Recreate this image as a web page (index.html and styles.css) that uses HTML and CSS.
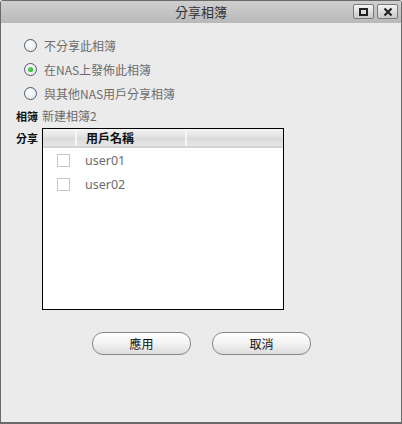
FILE: index.html
```html
<!DOCTYPE html>
<html>
<head>
<meta charset="utf-8">
<link rel="stylesheet" href="styles.css">
</head>
<body>
<div class="window">
  <div class="titlebar">
    <span class="title">分享相簿</span>
    <div class="win-btns">
      <span class="wbtn"><span class="sq"></span></span>
      <span class="wbtn"><svg width="10" height="10" viewBox="0 0 10 10"><path d="M1.5 1.5L8.5 8.5M8.5 1.5L1.5 8.5" stroke="#222" stroke-width="2.2"/></svg></span>
    </div>
  </div>
  <div class="content">
    <div class="radios">
      <label class="radio"><span class="dot"></span>不分享此相簿</label>
      <label class="radio"><span class="dot on"></span>在NAS上發佈此相簿</label>
      <label class="radio"><span class="dot"></span>與其他NAS用戶分享相簿</label>
    </div>
    <div class="field">
      <span class="lbl">相簿</span><span class="val">新建相簿2</span>
    </div>
    <div class="field share">
      <span class="lbl">分享</span>
      <div class="grid">
        <div class="ghead">
          <span class="hc c1"></span>
          <span class="hc c2">用戶名稱</span>
          <span class="hc c3"></span>
        </div>
        <div class="grow"><span class="cb"></span><span class="uname">user01</span></div>
        <div class="grow"><span class="cb"></span><span class="uname">user02</span></div>
      </div>
    </div>
    <div class="actions">
      <button class="btn">應用</button>
      <button class="btn">取消</button>
    </div>
  </div>
</div>
</body>
</html>
```
FILE: styles.css
```css
html, body { margin: 0; padding: 0; }
body {
  width: 402px; height: 424px; overflow: hidden;
  font-family: "Noto Sans", "Noto Sans CJK TC", sans-serif;
  font-size: 12px;
}
.window {
  box-sizing: border-box;
  width: 402px; height: 424px;
  border: 1px solid #6a6a6a;
  border-bottom-width: 2px;
  border-radius: 3px 3px 0 0;
  background: #ebebeb;
  display: flex; flex-direction: column;
}
.titlebar {
  height: 22px;
  flex: none;
  background: linear-gradient(#cfcfcf, #b9b9b9);
  position: relative;
  display: flex; align-items: center; justify-content: center;
}
.title { color: #333; font-size: 13px; font-family: "Noto Sans CJK TC", sans-serif; line-height: 22px; }
.win-btns {
  position: absolute; right: 3px; top: 3px;
  display: flex; gap: 3px;
}
.wbtn {
  box-sizing: border-box;
  width: 21px; height: 15px;
  border: 1px solid #7a7a7a;
  border-radius: 2px;
  background: linear-gradient(#f4f4f4, #c8c8c8);
  display: flex; align-items: center; justify-content: center;
}
.sq { box-sizing: border-box; width: 9px; height: 8px; border: 2px solid #222; }
.content { padding: 12px 0 0 0; display: flex; flex-direction: column; }
.radios { display: flex; flex-direction: column; gap: 4px; padding-left: 23px; }
.radio {
  display: flex; align-items: center; height: 20px;
  color: #6b6b6b; font-family: "Noto Sans CJK TC", sans-serif; font-size: 12px;
}
.dot {
  box-sizing: border-box;
  width: 13px; height: 13px; border-radius: 50%;
  border: 1px solid #4a5a70;
  background: radial-gradient(circle at 40% 35%, #ffffff, #dfe3e8);
  margin-right: 7px;
  display: flex; align-items: center; justify-content: center;
}
.dot.on::after {
  content: ""; width: 5px; height: 5px; border-radius: 50%;
  background: radial-gradient(circle at 40% 40%, #5fe05f, #1a9a1a);
}
.field { display: flex; align-items: baseline; padding-left: 15px; margin-top: 4px; }
.lbl { width: 26px; font-size: 11px; font-weight: bold; color: #111; font-family: "Noto Sans CJK TC", sans-serif; }
.val { color: #6b6b6b; font-family: "Noto Sans CJK TC", sans-serif; }
.field.share { align-items: flex-start; margin-top: 4px; }
.field.share .lbl { padding-top: 2px; }
.grid {
  box-sizing: border-box;
  width: 242px; height: 182px;
  border: 1px solid #000;
  background: #fff;
}
.ghead {
  display: flex; height: 17px;
  border-bottom: 2px solid #d4d4d4;
  background: linear-gradient(#f4f4f4 0%, #e2e2e2 45%, #dadada 55%, #e6e6e6 100%);
}
.hc { box-sizing: border-box; border-right: 2px solid #f6f6f6; height: 17px; line-height: 17px; }
.c1 { width: 34px; }
.c2 { width: 110px; padding-left: 9px; font-weight: bold; color: #111; font-family: "Noto Sans CJK TC", sans-serif; }
.c3 { flex: 1; border-right: none; }
.grow { display: flex; align-items: center; height: 24px; }
.cb {
  box-sizing: border-box; width: 13px; height: 13px;
  border: 1px solid #c8c8c0; background: #fff;
  margin-left: 14px; margin-right: 15px;
}
.uname { color: #6b6b6b; font-size: 12.5px; }
.actions { display: flex; gap: 21px; padding-left: 91px; margin-top: 22px; }
.btn {
  box-sizing: border-box;
  width: 99px; height: 23px;
  border: 1px solid #888;
  border-radius: 11px;
  background: linear-gradient(#ffffff 0%, #f2f2f2 50%, #dcdcdc 100%);
  font-family: "Noto Sans CJK TC", sans-serif;
  font-size: 12px; color: #111;
  padding: 0;
}
```
